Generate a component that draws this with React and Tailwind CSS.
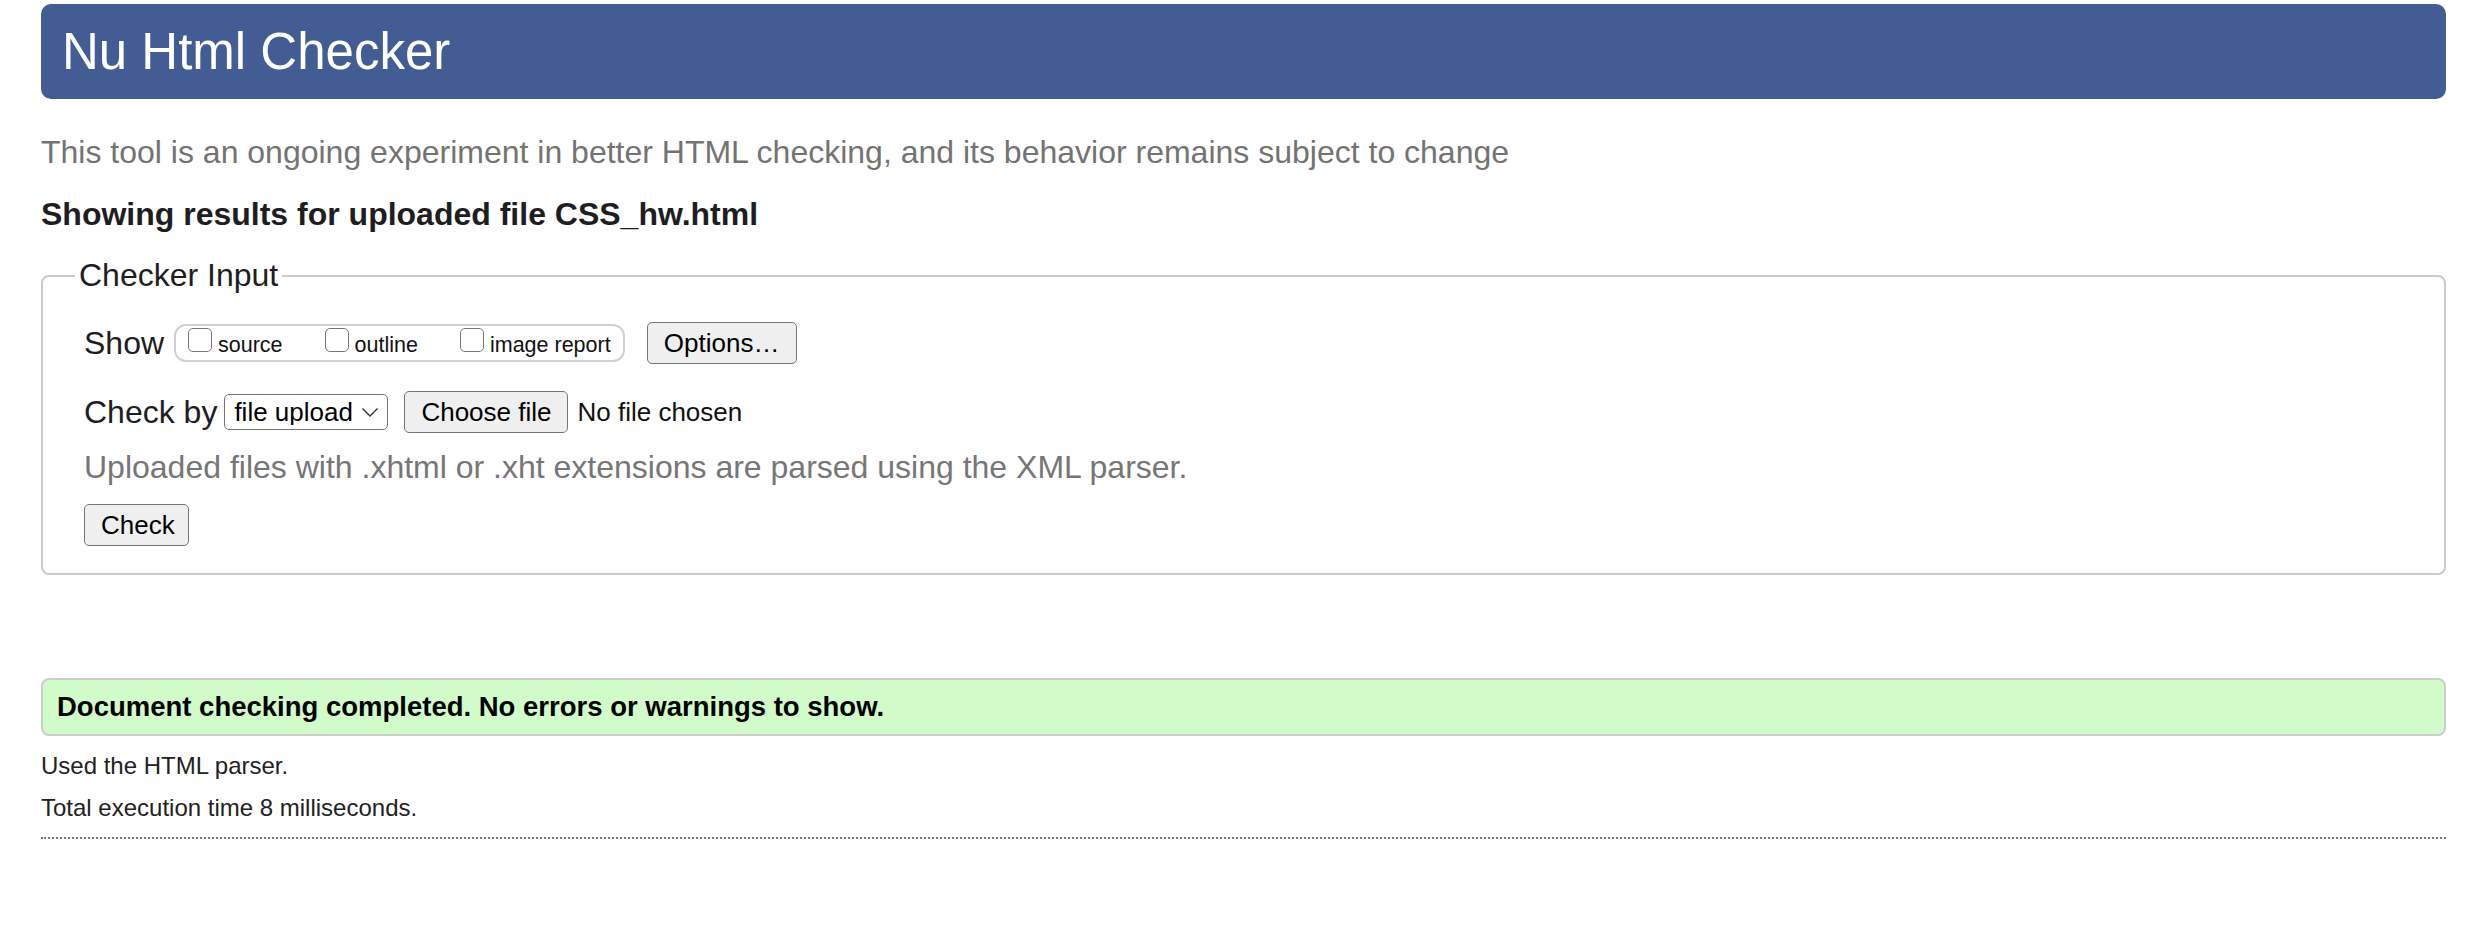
import React, { useState } from 'react'

const font = { fontFamily: '"Liberation Sans", Arial, sans-serif' }

const Check = ({ label, last }) => (
  <label className={`flex items-end ${last ? '' : 'mr-[42px]'}`}>
    <input
      type="checkbox"
      className="appearance-none w-[24px] h-[24px] rounded-[5px] border-[1.5px] border-[#767676] bg-white mb-[6px]"
    />
    <span className="ml-[6px] text-[21.5px] leading-[25px] text-[#111]">{label}</span>
  </label>
)

const Btn = ({ children, className = '' }) => (
  <button
    className={`h-[42px] px-[16px] rounded-[5px] border-[1.5px] border-[#767676] bg-[#efefef] text-[26px] leading-none text-black whitespace-nowrap ${className}`}
  >
    {children}
  </button>
)

export default function App() {
  const [method, setMethod] = useState('file')

  return (
    <div className="pl-[41px] pr-[30px] pt-[4px] bg-white min-h-[934px] text-[#222]" style={font}>
      <header className="h-[95px] rounded-[10px] bg-[#445c94] flex items-center pl-[21px]">
        <h1 className="text-[51px] leading-none text-white font-normal">Nu Html Checker</h1>
      </header>

      <p className="mt-[35px] text-[32px] leading-[37px] text-[#737373]">
        This tool is an ongoing experiment in better HTML checking, and its behavior remains subject to change
      </p>

      <h2 className="mt-[25px] text-[32px] leading-[37px] font-bold text-[#1d1d22]">
        Showing results for uploaded file CSS_hw.html
      </h2>

      <fieldset className="mt-[24px] border-2 border-[#cbcbcb] rounded-[8px] pl-[41px] pr-[20px] pb-[27px]">
        <legend className="-ml-[9px] px-[4px] text-[32px] leading-[37px] text-[#1d1d22]">Checker Input</legend>

        <div className="mt-[28px] h-[42px] flex items-center">
          <span className="text-[32px] leading-[37px] text-[#1d1d22]">Show</span>
          <div className="ml-[10px] h-[38px] rounded-[12px] border-2 border-[#d0d0d0] px-[12px] flex items-end pb-[2px]">
            <Check label="source" />
            <Check label="outline" />
            <Check label="image report" last />
          </div>
          <Btn className="ml-[22px] w-[150px]">Options…</Btn>
        </div>

        <div className="mt-[27px] h-[42px] flex items-center">
          <span className="text-[32px] leading-[37px] text-[#1d1d22]">Check by</span>
          <div className="relative ml-[7px]">
            <select
              value={method}
              onChange={(e) => setMethod(e.target.value)}
              className="appearance-none w-[164px] h-[36px] rounded-[5px] border-[1.5px] border-[#767676] bg-white pl-[9px] text-[26px] leading-none text-black"
              style={font}
            >
              <option value="file">file upload</option>
              <option value="url">address</option>
              <option value="text">text input</option>
            </select>
            <svg className="absolute right-[9px] top-[13px] pointer-events-none" width="18" height="11" viewBox="0 0 18 11" fill="none">
              <path d="M1.5 1.5 L9 9 L16.5 1.5" stroke="#333" strokeWidth="1.4" />
            </svg>
          </div>
          <Btn className="ml-[16px]">Choose file</Btn>
          <span className="ml-[9px] text-[26px] leading-none text-[#111]">No file chosen</span>
        </div>

        <p className="mt-[16px] text-[32px] leading-[37px] text-[#767676]">
          Uploaded files with .xhtml or .xht extensions are parsed using the XML parser.
        </p>

        <Btn className="mt-[18px] h-[41px] w-[105px]">Check</Btn>
      </fieldset>

      <div className="mt-[103px] h-[58px] rounded-[8px] border-2 border-[#cccccc] bg-[#d1fcc9] flex items-center pl-[14px]">
        <span className="text-[27.5px] leading-none font-bold text-black">
          Document checking completed. No errors or warnings to show.
        </span>
      </div>

      <p className="mt-[16px] text-[24px] leading-[28px] text-[#222]">Used the HTML parser.</p>
      <p className="mt-[14px] text-[24px] leading-[28px] text-[#222]">Total execution time 8 milliseconds.</p>

      <div className="mt-[15px] border-t-2 border-dotted border-[#777]" />
    </div>
  )
}
